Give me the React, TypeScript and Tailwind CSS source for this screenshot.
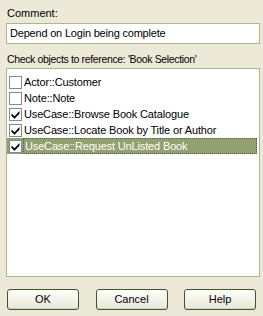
import React from "react";

const items = [
  { label: "Actor::Customer", checked: false },
  { label: "Note::Note", checked: false },
  { label: "UseCase::Browse Book Catalogue", checked: true },
  { label: "UseCase::Locate Book by Title or Author", checked: true },
  { label: "UseCase::Request UnListed Book", checked: true, selected: true },
];

function Check({ checked }: { checked: boolean }) {
  return (
    <div className="w-[13px] h-[13px] border border-[#7f8a96] bg-white flex items-center justify-center shrink-0">
      {checked && (
        <svg width="9" height="9" viewBox="0 0 9 9">
          <path d="M0.5 3.5 L3.5 6.2 L8.5 1 L8.5 3.8 L3.5 8.8 L0.5 6 Z" fill="#000" />
        </svg>
      )}
    </div>
  );
}

function Btn({ children }: { children: React.ReactNode }) {
  return (
    <div className="w-[72px] h-[21px] rounded-[3px] border border-[#37592a] bg-gradient-to-b from-[#fffff8] to-[#e8e7dc] flex items-center justify-center text-black shadow-[inset_0_-1px_0_#d6d3c2]">
      {children}
    </div>
  );
}

export default function App() {
  return (
    <div
      className="w-[263px] h-[316px] bg-[#ece9d8] text-[11px] text-black relative"
      style={{ fontFamily: '"Liberation Sans", Arial, sans-serif' }}
    >
      <div className="px-[6px] pt-[6px]">
        <div className="pl-[1px] h-[14px] leading-[14px]">Comment:</div>
        <div className="mt-[3px] h-[21px] w-[254px] border border-[#a5b98a] bg-white flex items-center pl-[3px] tracking-[-0.2px]">
          Depend on Login being complete
        </div>
        <div className="mt-[8px] pl-[1px] h-[14px] leading-[14px] text-[10.5px] tracking-[-0.35px]">
          Check objects to reference: 'Book Selection'
        </div>
        <div className="mt-[2px] h-[209px] w-[254px] border border-[#a5b98a] bg-white pt-[5px] pl-0 pr-[2px]">
          {items.map((it) => (
            <div
              key={it.label}
              className={`h-[16px] flex items-center ${it.selected ? "bg-[#93a070]" : ""}`}
            >
              <div className="pl-[2px] pr-[1px]">
                <Check checked={it.checked} />
              </div>
              <div
                className={`h-[16px] flex items-center pr-[2px] pl-[1px] tracking-[-0.15px] ${
                  it.selected ? "text-white border border-dotted border-[#5a5a5a] flex-1" : ""
                }`}
              >
                {it.label}
              </div>
            </div>
          ))}
        </div>
      </div>
      <div className="flex justify-between px-[7px] mt-[12px]">
        <Btn>OK</Btn>
        <Btn>Cancel</Btn>
        <Btn>Help</Btn>
      </div>
    </div>
  );
}
